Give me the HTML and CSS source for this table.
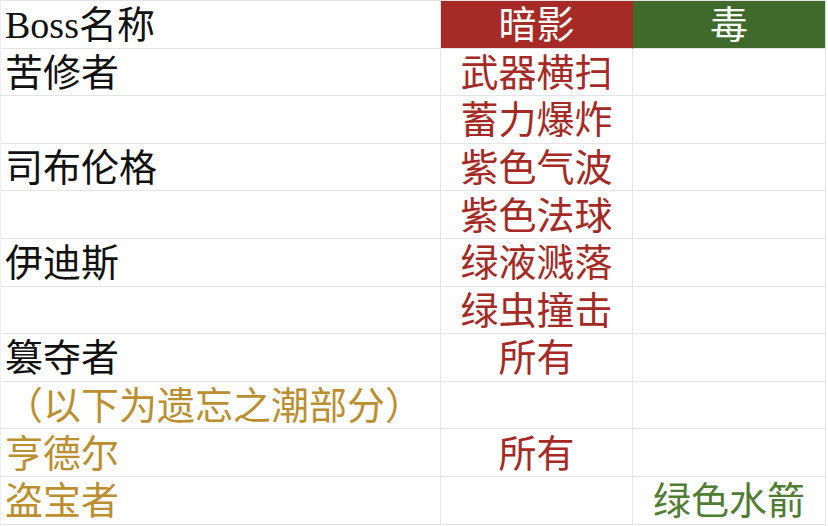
FILE: index.html
```html
<!DOCTYPE html>
<html lang="zh-CN">
<head>
<meta charset="utf-8">
<title>Boss</title>
<link rel="stylesheet" href="styles.css">
</head>
<body>
<div class="sheet">
  <div class="cell name">Boss名称</div>
  <div class="cell head shadow">暗影</div>
  <div class="cell head poison">毒</div>

  <div class="cell name">苦修者</div>
  <div class="cell red">武器横扫</div>
  <div class="cell"></div>

  <div class="cell name"></div>
  <div class="cell red">蓄力爆炸</div>
  <div class="cell"></div>

  <div class="cell name">司布伦格</div>
  <div class="cell red">紫色气波</div>
  <div class="cell"></div>

  <div class="cell name"></div>
  <div class="cell red">紫色法球</div>
  <div class="cell"></div>

  <div class="cell name">伊迪斯</div>
  <div class="cell red">绿液溅落</div>
  <div class="cell"></div>

  <div class="cell name"></div>
  <div class="cell red">绿虫撞击</div>
  <div class="cell"></div>

  <div class="cell name">篡夺者</div>
  <div class="cell red">所有</div>
  <div class="cell"></div>

  <div class="cell name gold">（以下为遗忘之潮部分）</div>
  <div class="cell"></div>
  <div class="cell"></div>

  <div class="cell name gold">亨德尔</div>
  <div class="cell red">所有</div>
  <div class="cell"></div>

  <div class="cell name gold">盗宝者</div>
  <div class="cell"></div>
  <div class="cell green">绿色水箭</div>
</div>
</body>
</html>
```

FILE: styles.css
```css
html, body {
  margin: 0;
  padding: 0;
  background: #ffffff;
}

.sheet {
  display: grid;
  grid-template-columns: 440px 192px 193px;
  grid-auto-rows: 47.6px;
  border-top: 1px solid #e3e3e8;
  border-left: 1px solid #efeff2;
  width: max-content;
  font-family: "Liberation Serif", "Noto Sans CJK SC", serif;
  font-size: 38px;
  line-height: 1;
  color: #111111;
}

.cell {
  box-sizing: border-box;
  border-right: 1px solid #e3e3e8;
  border-bottom: 1px solid #e3e3e8;
  display: flex;
  align-items: center;
  justify-content: center;
  white-space: nowrap;
  overflow: hidden;
  padding-top: 2px;
}

.name {
  justify-content: flex-start;
  padding-left: 4px;
}

.head {
  color: #ffffff;
  border-right-color: transparent;
}

.shadow {
  background: #a62a25;
}

.poison {
  background: #3f6a2b;
  border-right-color: #d9dcd6;
}

.red {
  color: #a52a25;
}

.green {
  color: #4f7d33;
}

.gold {
  color: #bb8f2f;
}
```
